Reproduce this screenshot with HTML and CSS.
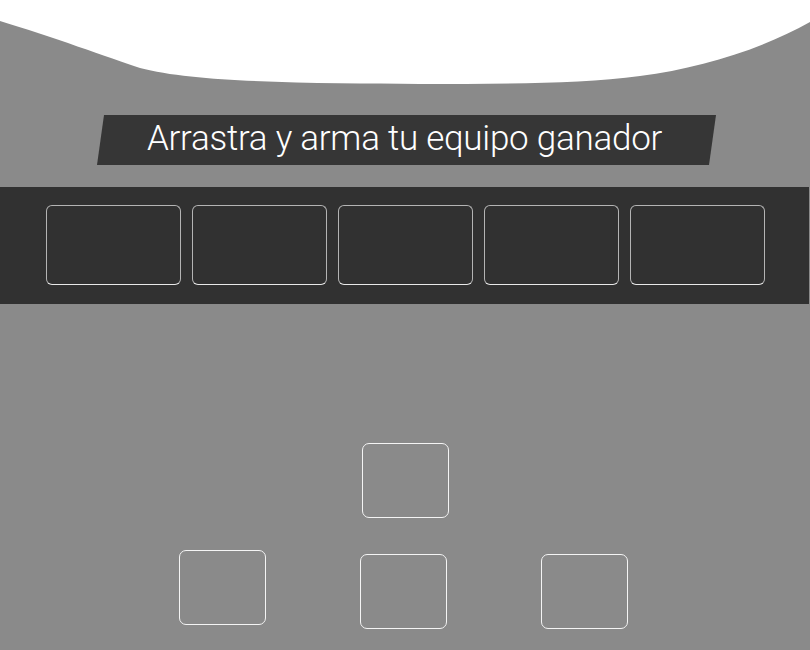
FILE: index.html
```html
<!DOCTYPE html>
<html lang="es">
<head>
<meta charset="utf-8">
<title>Arma tu equipo</title>
<link rel="stylesheet" href="styles.css">
</head>
<body>
<div class="page">
  <svg class="top-wave" viewBox="0 0 810 90" preserveAspectRatio="none" aria-hidden="true">
    <path d="M0 0 H810 V22 C760 50 700 68 640 76 C580 84 500 84 420 84 C330 83 200 84 140 68 C110 58 50 36 0 21 Z" fill="#ffffff"/>
  </svg>
  <div class="title-wrap">
    <div class="title-banner"><h1 class="title">Arrastra y arma tu equipo ganador</h1></div>
  </div>
  <div class="slots-band">
    <div class="slot"></div>
    <div class="slot"></div>
    <div class="slot"></div>
    <div class="slot"></div>
    <div class="slot"></div>
  </div>
  <div class="field">
    <div class="pos pos-1"></div>
    <div class="pos pos-2"></div>
    <div class="pos pos-3"></div>
    <div class="pos pos-4"></div>
  </div>
</div>
</body>
</html>
```

FILE: styles.css
```css
html, body {
  margin: 0;
  padding: 0;
  background: #8a8a8a;
}
.page {
  position: relative;
  width: 810px;
  height: 650px;
  overflow: hidden;
  font-family: Roboto, "Liberation Sans", sans-serif;
}
.top-wave {
  display: block;
  width: 810px;
  height: 90px;
  position: absolute;
  top: 0;
  left: 0;
}
.title-wrap {
  position: relative;
  padding-top: 115px;
  padding-left: 97px;
  height: 50px;
}
.title-banner {
  width: 619px;
  height: 50px;
  background: #363636;
  clip-path: polygon(7px 0, 100% 0, 612px 100%, 0 100%);
  display: flex;
  align-items: center;
  justify-content: center;
}
.title {
  margin: 0;
  color: #ffffff;
  font-weight: 300;
  font-size: 35px;
  line-height: 1;
  letter-spacing: -0.25px;
  transform: translate(-2px, -2px);
}
.slots-band {
  margin-top: 22px;
  width: 809px;
  height: 117px;
  background: #313131;
  box-sizing: border-box;
  padding: 18px 0 0 46px;
  display: flex;
  gap: 11px;
}
.slot {
  width: 135px;
  height: 80px;
  box-sizing: border-box;
  border: 1px solid #b4b4b4;
  border-bottom-color: #e8e8e8;
  border-radius: 6px;
}
.field {
  position: relative;
  height: 346px;
}
.pos {
  position: absolute;
  width: 87px;
  height: 75px;
  box-sizing: border-box;
  border: 1.5px solid #f4f4f4;
  border-radius: 7px;
}
.pos-1 { left: 362px; top: 139px; }
.pos-2 { left: 179px; top: 246px; }
.pos-3 { left: 360px; top: 250px; }
.pos-4 { left: 541px; top: 250px; }
```
